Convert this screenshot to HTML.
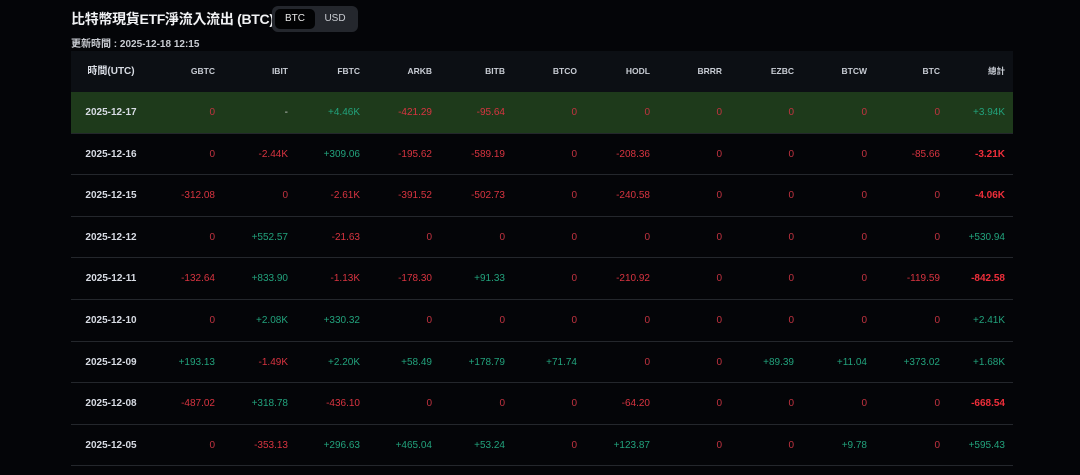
<!DOCTYPE html><html><head><meta charset="utf-8"><style>
body{margin:0;width:1080px;height:475px;background:#040508;font-family:"Liberation Sans","Noto Sans CJK TC",sans-serif;color:#e6e8ec;overflow:hidden;position:relative}
.t{position:absolute;left:71px;top:9px;font-size:14px;font-weight:bold;color:#f1f2f4;white-space:nowrap;letter-spacing:-0.3px}
.tg{position:absolute;left:272px;top:6px;width:86px;height:26px;background:#24272d;border-radius:6px}
.tg span{position:absolute;top:3px;height:20px;line-height:20px;font-size:10px;text-align:center;width:40px}
.u{position:absolute;left:71px;top:35px;font-size:10px;font-weight:bold;color:#c9ccd2}
.tb{position:absolute;left:71px;top:51px;width:942px}
.r{height:41.6px;position:relative;border-bottom:1px solid #24272c;box-sizing:border-box}
.h{background:#0c0f14;border:none;height:41px}
.g{background:#1e3a1b}
.r span{position:absolute;top:0;line-height:41px;font-size:10px;text-align:right;width:80px}
.h span{font-weight:bold;font-size:8.5px;color:#c8ccd4}
.r span.d{left:0;width:80px;text-align:center;font-weight:bold;color:#d8dce4;font-size:10px}
.n{color:#d83440}.p{color:#22a27c}.z{color:#c23340}.gr{color:#ccc}
.bn{color:#ee2e3a;font-weight:bold}
</style></head><body>
<div class="t">比特幣現貨ETF淨流入流出 (BTC)</div>
<div class="tg"><span style="left:3px;background:#020304;border-radius:5px;color:#e8e8e8">BTC</span><span style="left:43px;color:#c9ccd2">USD</span></div>
<div class="u">更新時間 : 2025-12-18 12:15</div>
<div class="tb" id="tb"></div>
<script>
var X=[144,217,289,361,434,506,579,651,723,796,869,934];
var H=["GBTC","IBIT","FBTC","ARKB","BITB","BTCO","HODL","BRRR","EZBC","BTCW","BTC","總計"];
var R=[["2025-12-17","0","-","+4.46K","-421.29","-95.64","0","0","0","0","0","0","+3.94K"],
["2025-12-16","0","-2.44K","+309.06","-195.62","-589.19","0","-208.36","0","0","0","-85.66","-3.21K"],
["2025-12-15","-312.08","0","-2.61K","-391.52","-502.73","0","-240.58","0","0","0","0","-4.06K"],
["2025-12-12","0","+552.57","-21.63","0","0","0","0","0","0","0","0","+530.94"],
["2025-12-11","-132.64","+833.90","-1.13K","-178.30","+91.33","0","-210.92","0","0","0","-119.59","-842.58"],
["2025-12-10","0","+2.08K","+330.32","0","0","0","0","0","0","0","0","+2.41K"],
["2025-12-09","+193.13","-1.49K","+2.20K","+58.49","+178.79","+71.74","0","0","+89.39","+11.04","+373.02","+1.68K"],
["2025-12-08","-487.02","+318.78","-436.10","0","0","0","-64.20","0","0","0","0","-668.54"],
["2025-12-05","0","-353.13","+296.63","+465.04","+53.24","0","+123.87","0","0","+9.78","0","+595.43"]];
var s='<div class="r h"><span class="d" style="left:0">時間(UTC)</span>';
H.forEach(function(h,i){s+='<span style="left:'+(X[i]-80)+'px">'+h+'</span>'});
s+='</div>';
R.forEach(function(r,k){s+='<div class="r'+(k==0?' g':'')+'"><span class="d">'+r[0]+'</span>';
for(var i=1;i<r.length;i++){var v=r[i],c=v=="-"?"gr":v[0]=="+"?"p":v=="0"?"z":"n";if(i==12&&c=="n")c="bn";
s+='<span class="'+c+'" style="left:'+(X[i-1]-80)+'px">'+v+'</span>'}s+='</div>'});
document.getElementById('tb').innerHTML=s;
</script></body></html>
